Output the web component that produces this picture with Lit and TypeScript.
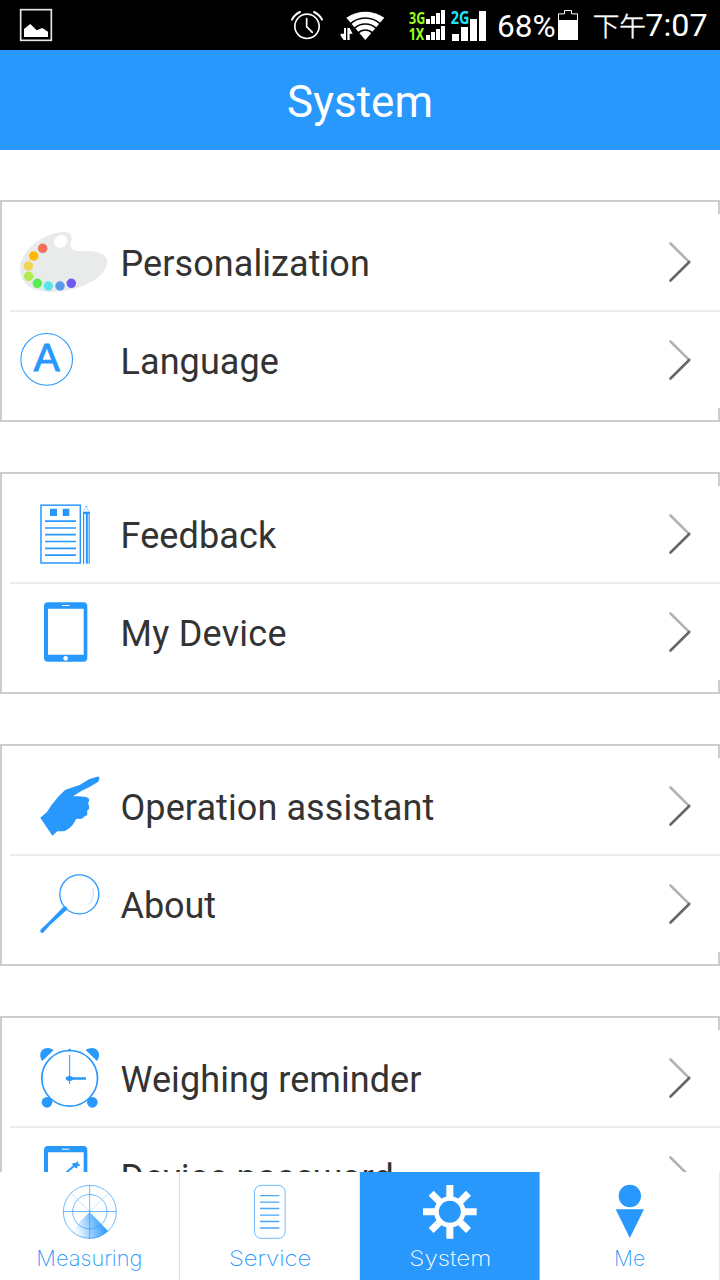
import { LitElement, html, svg, css } from "lit";
import { customElement, property } from "lit/decorators.js";

const BLUE = "#2998fc";

const tabletFrame = (top: number) => svg`
  <path fill=${BLUE} fill-rule="evenodd" d="M144 ${top}H251Q262 ${top} 262 ${top + 12}V${top + 166}Q262 ${top + 178} 251 ${top + 178}H144Q132 ${top + 178} 132 ${top + 166}V${top + 12}Q132 ${top} 144 ${top}ZM144 ${top + 19}V${top + 157}H251V${top + 19}Z"/>
  <path d="M186 ${top + 9.5}H208" stroke="#fff" stroke-width="3"/>
  <circle cx="197" cy=${top + 168} r="7" fill="#fff"/>`;

const dots: [number, number, string][] = [
  [128, 160, "#f27059"], [101, 183, "#ffba00"], [85, 213, "#eed54f"], [86, 244, "#b0ea4b"],
  [112, 265, "#5aec55"], [145, 273, "#5ae4ee"], [180, 273, "#5a9aec"], [214, 265, "#6e5aee"],
];

const icons: Record<string, { y: number; art: unknown }> = {
  palette: {
    y: 57,
    art: svg`
      <path fill="#e9ebeb" d="M60 220C60 170 130 111 191 111C209 111 217 119 214 134C209 156 214 168 234 168C262 168 322 165 322 202C318 250 236 291 152 291C94 291 60 264 60 220Z"/>
      <ellipse cx="182" cy="139" rx="21" ry="18" transform="rotate(-32 182 139)" fill="#fff"/>
      ${dots.map(([x, y, c]) => svg`<circle cx=${x} cy=${y} r="14.200" fill=${c}/>`)}`,
  },
  language: {
    y: 351,
    art: svg`
      <circle cx="140" cy="493" r="77.500" fill="none" stroke=${BLUE} stroke-width="3.200"/>
      <text class="letter" x="101" y="527.500" textLength="78" lengthAdjust="spacingAndGlyphs">A</text>`,
  },
  feedback: {
    y: 48,
    art: svg`
      <rect x="123" y="105.500" width="118" height="173.500" fill="none" stroke=${BLUE} stroke-width="4.500"/>
      <path fill=${BLUE} d="M150 116h21v22h-21zM188 116h20v22h-20z"/>
      <path stroke=${BLUE} stroke-width="5" d="M135 153.500H228M135 174H228M135 194H228M135 214.500H228M135 235H228M135 255.500H228"/>
      <path fill=${BLUE} d="M249 125H269V132H249ZM256 111L259 107L262 111Z"/>
      <path fill="none" stroke=${BLUE} stroke-opacity=".45" stroke-width="2" d="M250.500 126L259 109L267.500 126"/>
      <path stroke=${BLUE} stroke-width="3.500" d="M250.800 127V281M267.500 127V281"/>
      <path stroke=${BLUE} stroke-width="6" d="M260.500 127V281"/>`,
  },
  device: { y: 342, art: tabletFrame(397) },
  hand: {
    y: 48,
    art: svg`<path fill=${BLUE} d="M121 227L141 210L153 191L176 163L196 143L239 129L267 112L291 104Q300 102 298 110L295 119L270 134L244 147L219 163L235 163L259 165Q269 168 267 177L264 184Q269 191 267 201L261 207Q264 214 261 220L252 224Q249 231 239 231L229 230L220 246Q208 262 192 268L172 268L157 281Z"/>`,
  },
  magnifier: {
    y: 342,
    art: svg`
      <circle cx="238" cy="457" r="58.500" fill="none" stroke=${BLUE} stroke-width="4"/>
      <path fill=${BLUE} d="M189 496L197 493L202 499L199 505L150 549L131 571Q123 576 120 567L126 559L146 540Z"/>
      <path fill="none" stroke=${BLUE} stroke-opacity=".5" stroke-width="2" d="M278 438Q286 464 268 486"/>
      <path stroke=${BLUE} stroke-opacity=".5" stroke-width="2" stroke-dasharray="4 3" d="M187 519L151 553"/>`,
  },
  alarm: {
    y: 45,
    art: svg`
      <circle cx="209" cy="190" r="83.500" fill="none" stroke=${BLUE} stroke-width="5"/>
      <path fill=${BLUE} d="M127 138C113 118 124 99 144 99Q155 100 161 105ZM291 138C305 118 294 99 274 99Q263 100 257 105Z"/>
      <circle cx="141" cy="262" r="16" fill=${BLUE}/><circle cx="277" cy="262" r="16" fill=${BLUE}/>
      <path fill=${BLUE} d="M204 109V105Q209 98 214 105V109Z"/>
      <path stroke=${BLUE} stroke-width="3" d="M209 120V207"/>
      <path stroke=${BLUE} stroke-width="7.500" d="M209 190.500H258"/>
      <ellipse cx="208" cy="190.500" rx="11" ry="6.500" fill=${BLUE}/><circle cx="209" cy="190.500" r="7.500" fill=${BLUE}/>`,
  },
  password: {
    y: 339,
    art: svg`${tabletFrame(393)}
      <path stroke=${BLUE} stroke-width="6" d="M180 490L229 446"/>
      <path fill=${BLUE} d="M236 437L233 444L241 451L236 454L232 453L232 460L225 459L223 452L216 449L219 444L226 444Z"/>`,
  },
};

@customElement("setting-row")
class SettingRow extends LitElement {
  @property() icon = "";
  @property() label = "";
  @property() fit = "0";

  static styles = css`
    :host { display: flex; align-items: center; height: 96px; background: #fff; }
    .icon { width: 110px; height: 96px; flex: none; }
    .label { flex: 1; font: 36px/44px Roboto, sans-serif; color: #333; padding: 3px 0 0 0.5px; white-space: nowrap; }
    .chevron { width: 24px; height: 44px; margin-right: 28.5px; fill: none; stroke-width: 2.6; stroke-linecap: round; }
    .letter { font: 115px "Liberation Sans", sans-serif; fill: #2998fc; stroke: #2998fc; stroke-width: 3; }
  `;

  render() {
    const { y, art } = icons[this.icon];
    return html`
      <svg class="icon" viewBox="30 ${y} 330 288">${art}</svg>
      <span class="label" style="letter-spacing:${this.fit}px">${this.label}</span>
      <svg class="chevron" viewBox="0 0 24 44">
        <path stroke="#b2b2b2" d="M2.500 3.500L21 21.800"/>
        <path stroke="#666" d="M21.200 22L2.500 40.500"/>
      </svg>`;
  }
}

@customElement("status-bar")
class StatusBar extends LitElement {
  static styles = css`
    :host { display: flex; justify-content: space-between; height: 50px; background: #000; }
    svg { height: 50px; display: block; }
    .gallery { width: 60px; }
    .tray { width: 440px; }
    .net { font: bold 47px "Noto Sans", sans-serif; }
    .big { font: 96px Roboto, sans-serif; fill: #fff; }
    .cjk { font: 300 80px "Noto Sans CJK TC", sans-serif; fill: #fff; stroke: #fff; stroke-width: 1.5; }
  `;

  render() {
    return html`
      <svg class="gallery" viewBox="0 0 180 150">
        <rect x="62" y="29" width="92" height="92" fill="none" stroke="#e6e6e6" stroke-width="5"/>
        <path fill="#fff" d="M72 111V87L91 72L110 91L127 84L144 95V111Z"/>
      </svg>
      <svg class="tray" viewBox="0 0 1320 150">
        <g fill="none" stroke="#fff" stroke-linecap="round">
          <circle cx="81" cy="79" r="36.500" stroke-width="5"/>
          <path stroke-width="5" d="M80 56V80L97 97"/>
          <path stroke-width="6" d="M36 59Q43 44 60 36M126 59Q119 44 102 36"/>
        </g>
        <path fill="#fff" d="M256 120L199 53Q256 18 313 53Z"/>
        <g fill="none" stroke="#000" stroke-width="5">
          <circle cx="256" cy="120" r="66"/><circle cx="256" cy="120" r="48"/><circle cx="256" cy="120" r="30"/>
        </g>
        <path fill="#000" d="M180 84H212L222 103V122H180Z"/>
        <path fill="#fff" d="M192 84H198V120H191L182 107V101H192ZM202 120V84H209L218 101H209V120Z"/>
        <g class="net">
          <text x="387" y="71.500" fill="#9cff1a" textLength="49" lengthAdjust="spacingAndGlyphs">3G</text>
          <text x="386" y="119.500" fill="#9cff1a" textLength="47" lengthAdjust="spacingAndGlyphs">1X</text>
          <text x="512" y="71.500" fill="#1fe4fa" textLength="56" lengthAdjust="spacingAndGlyphs" style="font-size:54px">2G</text>
        </g>
        <path fill="#fff" d="M438 57h12v15h-12zM453 48h12v24h-12zM468 39h12v33h-12zM483 30h12v42h-12zM438 105h12v15h-12zM453 96h12v24h-12zM468 87h12v33h-12zM483 78h12v42h-12zM516 102h21v21h-21zM543 81h21v42h-21zM570 57h21v66h-21zM597 33h21v90h-21z"/>
        <text class="big" x="651" y="109.500" textLength="176" lengthAdjust="spacingAndGlyphs">68%</text>
        <path fill="none" stroke="#fff" stroke-width="3" d="M835.500 118V41.500H853.500V31.500H874.500V41.500H892.500V118"/>
        <path fill="#fff" d="M834 60h60v60h-60z"/>
        <text class="cjk" x="938" y="109" textLength="160" lengthAdjust="spacingAndGlyphs">下午</text>
        <text class="big" x="1096" y="108" textLength="187" lengthAdjust="spacingAndGlyphs">7:07</text>
      </svg>`;
  }
}

const tabs = [
  {
    name: "Measuring", x: 109, w: 318,
    art: svg`
      <defs><linearGradient id="sweep" x1="0" y1=".2" x2="1" y2="0">
        <stop offset=".05" stop-color=${BLUE} stop-opacity=".05"/><stop offset=".85" stop-color=${BLUE}/>
      </linearGradient></defs>
      <path fill="url(#sweep)" d="M269 141L324 198Q300 221 269 221Q237 221 212 198Z"/>
      <g fill="none" stroke=${BLUE} stroke-width="2.500" stroke-opacity=".8">
        <circle cx="269.500" cy="140.500" r="79.500"/><circle cx="269.500" cy="140" r="51.500"/>
        <path d="M190 139.500H349M269 61V220"/>
        <path stroke-opacity=".3" d="M213 84L269 140L326 84"/>
      </g>`,
  },
  {
    name: "Service", x: 687, w: 247,
    art: svg`
      <rect x="763.500" y="61" width="92" height="159" rx="20" fill="none" stroke=${BLUE} stroke-opacity=".65" stroke-width="3"/>
      <path stroke=${BLUE} stroke-width="4" stroke-opacity=".85" d="M780 92H838M780 111.500H838M780 130.500H838M780 150.500H838M780 169.500H838M780 189H838"/>`,
  },
  {
    name: "System", x: 1228, w: 246,
    art: svg`
      <g fill="none" stroke="#fff">
        <circle cx="1349.500" cy="140.500" r="40" stroke-width="14"/>
        <path stroke-width="21" d="M1349.500 60V97M1349.500 184V221M1269 140.500H1306M1393 140.500H1430M1293.500 84.500L1319 110M1380 171L1405.500 196.500M1293.500 196.500L1319 171M1380 110L1405.500 84.500"/>
      </g>`,
  },
  {
    name: "Me", x: 1842, w: 93,
    art: svg`<circle cx="1889.500" cy="93" r="33.500" fill=${BLUE}/><path fill=${BLUE} d="M1847 132.500H1932L1889.500 219Z"/>`,
  },
];

@customElement("tab-bar")
class TabBar extends LitElement {
  static styles = css`
    :host { display: grid; grid-template-columns: repeat(4, 180px); height: 108px; background: #fff; }
    .tab { display: block; height: 108px; box-shadow: inset -1px 0 #dcebf8; }
    .tab:first-child { box-shadow: inset -1px 0 #ddd; }
    .tab.on { background: #2998fc; box-shadow: inset -1px 0 #7fc0fc; }
    svg { width: 180px; height: 108px; display: block; }
    text { font: 200 63px Inter, sans-serif; fill: #2998fc; }
    .on text { fill: #fff; }
  `;

  render() {
    return html`${tabs.map((t, i) => html`
      <div class="tab ${t.name === "System" ? "on" : ""}">
        <svg viewBox="${i * 540} 21 540 324">
          ${t.art}
          <text x=${t.x} y="304" textLength=${t.w} lengthAdjust="spacingAndGlyphs">${t.name}</text>
        </svg>
      </div>`)}`;
  }
}

const groups = [
  [["palette", "Personalization", "0.08"], ["language", "Language", "0.08"]],
  [["feedback", "Feedback", "0.12"], ["device", "My Device", "0.25"]],
  [["hand", "Operation assistant", "0.09"], ["magnifier", "About", "-0.1"]],
  [["alarm", "Weighing reminder", "0.07"], ["password", "Device password", "0.08"]],
];

@customElement("app-root")
class AppRoot extends LitElement {
  static styles = css`
    :host { display: flex; flex-direction: column; width: 720px; height: 1280px; overflow: hidden; background: #fff; }
    status-bar, .title, tab-bar { flex: none; }
    .title { height: 100px; background: #2998fc; color: #fff; text-align: center; font: 44px/104px Roboto, sans-serif; }
    .list { flex: 1; min-height: 0; overflow: hidden; display: flex; flex-direction: column; gap: 50px; padding-top: 50px; }
    .group { flex: none; box-sizing: border-box; height: 222px; border: 2px solid #ccc; padding: 12px 0 12px 8px; }
    setting-row { margin-right: -2px; }
    setting-row:first-child { border-bottom: 2px solid #ececec; }
  `;

  render() {
    return html`
      <status-bar></status-bar>
      <div class="title">System</div>
      <div class="list">
        ${groups.map((g) => html`<div class="group">
          ${g.map(([icon, label, fit]) => html`<setting-row icon=${icon} label=${label} fit=${fit}></setting-row>`)}
        </div>`)}
      </div>
      <tab-bar></tab-bar>`;
  }
}
